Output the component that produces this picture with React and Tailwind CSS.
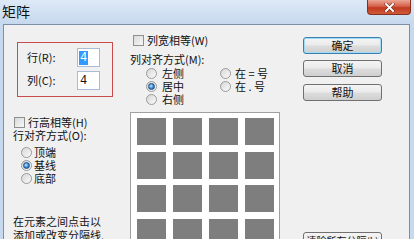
import React from "react";

function Checkbox() {
  return (
    <span className="block w-[11px] h-[11px] border border-[#8e8f8f] bg-[linear-gradient(135deg,#d9dadb,#f7f7f7)] shrink-0" />
  );
}

function Radio({ checked }) {
  return (
    <span className="flex items-center justify-center w-[11px] h-[11px] rounded-full border border-[#9a9a9a] bg-[linear-gradient(135deg,#d6d6d6,#fbfbfb)] shrink-0">
      {checked && (
        <span className="block w-[7px] h-[7px] rounded-full border border-[#1d4f86] bg-[radial-gradient(circle_at_40%_40%,#b8ecff,#3a86d4_55%,#1b4e8a)]" />
      )}
    </span>
  );
}

function Btn({ children, def, className = "" }) {
  return (
    <div
      className={
        "flex items-center justify-center whitespace-nowrap w-[79px] h-[17px] rounded-[3px] leading-[13px] text-[#111] bg-[linear-gradient(#f4f4f4,#ebebeb_45%,#dcdcdc_55%,#cfcfcf)] " +
        (def
          ? "border border-[#3c7fb1] shadow-[inset_0_0_0_1px_#9fdcf4] "
          : "border border-[#707070] ") +
        className
      }
    >
      {children}
    </div>
  );
}

export default function App() {
  const cells = Array.from({ length: 16 });
  return (
    <div className="w-[414px] h-[239px] overflow-hidden bg-[#c6d9ef] text-[#111] font-['Noto_Sans_CJK_SC',sans-serif]">
      {/* title bar */}
      <div className="h-[22px] flex items-start justify-between pl-[2px] pr-[3px] bg-[linear-gradient(#dde9f6,#c8daef)]">
        <span className="text-[14px] leading-[16px] mt-[3px]">矩阵</span>
        <div className="flex items-center justify-center w-[44px] h-[15px] rounded-b-[4px] border border-t-0 border-[#83301f] bg-[linear-gradient(#eaa796,#d6604a_45%,#c2391f_55%,#cf5a3a)]">
          <svg width="11" height="9" viewBox="0 0 11 9">
            <path d="M2 1 L9 8 M9 1 L2 8" stroke="#5a1a10" strokeWidth="3" strokeLinecap="square" />
            <path d="M2 1 L9 8 M9 1 L2 8" stroke="#ffffff" strokeWidth="2" strokeLinecap="square" />
          </svg>
        </div>
      </div>
      {/* frame */}
      <div className="pt-[2px] pl-[3px] pr-[4px] h-[217px]">
        <div className="h-[300px] border-t border-l border-r border-[#7d8fa6] bg-[#f0f0f0] flex text-[11px] leading-[13px]">
          {/* column A */}
          <div className="w-[126px] shrink-0 flex flex-col">
            <div className="ml-[13px] mt-[17px] w-[96px] h-[55px] border border-[#c94b4b] pt-[5px] pl-[9px] flex flex-col gap-[4px]">
              <div className="flex items-center h-[19px]">
                <span className="w-[50px]">行(R):</span>
                <div className="w-[23px] h-[19px] bg-white border border-[#a9bcd3] flex items-center pl-[1px]">
                  <span className="bg-[#3399ff] text-white font-['Liberation_Mono',monospace] text-[12px] leading-[14px] px-[1px]">4</span>
                </div>
              </div>
              <div className="flex items-center h-[19px]">
                <span className="w-[50px]">列(C):</span>
                <div className="w-[23px] h-[19px] bg-white border border-[#a9bcd3] flex items-center pl-[2px]">
                  <span className="font-['Liberation_Mono',monospace] text-[12px] leading-[14px]">4</span>
                </div>
              </div>
            </div>
            <div className="mt-[19px] ml-[10px] h-[13px] flex items-center gap-[3px]">
              <Checkbox />
              <span>行高相等(H)</span>
            </div>
            <div className="ml-[9px] h-[13px]">行对齐方式(O):</div>
            <div className="mt-[4px] ml-[17px] flex flex-col">
              <div className="h-[13px] flex items-center gap-[2px]">
                <Radio />
                <span>顶端</span>
              </div>
              <div className="h-[13px] flex items-center gap-[2px]">
                <Radio checked />
                <span>基线</span>
              </div>
              <div className="h-[13px] flex items-center gap-[2px]">
                <Radio />
                <span>底部</span>
              </div>
            </div>
            <div className="mt-[29px] ml-[9px] leading-[14px]">
              <div>在元素之间点击以</div>
              <div>添加或改变分隔线.</div>
            </div>
          </div>
          {/* column B */}
          <div className="w-[150px] shrink-0 flex flex-col">
            <div className="mt-[9px] ml-[3px] h-[13px] flex items-center gap-[3px]">
              <Checkbox />
              <span>列宽相等(W)</span>
            </div>
            <div className="mt-[6px] h-[13px]">列对齐方式(M):</div>
            <div className="mt-[1px] flex">
              <div className="ml-[16px] w-[74px] flex flex-col">
                <div className="h-[13px] flex items-center gap-[5px]">
                  <Radio />
                  <span>左侧</span>
                </div>
                <div className="h-[13px] flex items-center gap-[5px]">
                  <Radio checked />
                  <span>居中</span>
                </div>
                <div className="h-[13px] flex items-center gap-[5px]">
                  <Radio />
                  <span>右侧</span>
                </div>
              </div>
              <div className="flex flex-col">
                <div className="h-[13px] flex items-center gap-[4px]">
                  <Radio />
                  <span className="whitespace-pre">在 = 号</span>
                </div>
                <div className="h-[13px] flex items-center gap-[4px]">
                  <Radio />
                  <span className="whitespace-pre">在 . 号</span>
                </div>
              </div>
            </div>
            <div className="mt-[6px] w-[150px] h-[160px] bg-white border border-[#a0a0a0] pt-[5px] pl-[6px]">
              <div className="grid grid-cols-[repeat(4,29px)] gap-x-[7px] gap-y-[6.5px]">
                {cells.map((_, i) => (
                  <div key={i} className="h-[27px] bg-[#7e7e7e]" />
                ))}
              </div>
            </div>
          </div>
          {/* column C */}
          <div className="ml-[23px] w-[79px] shrink-0 flex flex-col text-[11px]">
            <Btn def className="mt-[12px]">确定</Btn>
            <Btn className="mt-[6px]">取消</Btn>
            <Btn className="mt-[7px]">帮助</Btn>
            <Btn className="mt-[131px] text-[10px]">清除所有分隔(L)</Btn>
          </div>
        </div>
      </div>
    </div>
  );
}
